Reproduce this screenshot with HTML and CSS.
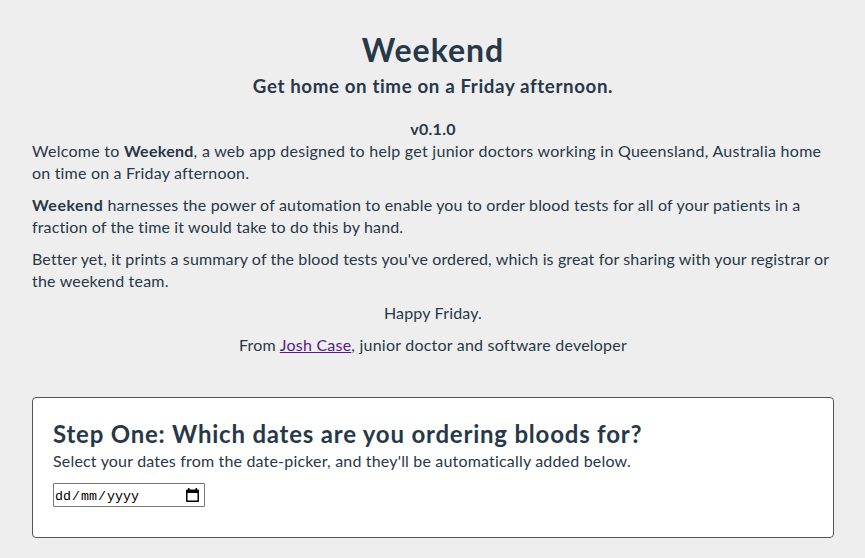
FILE: index.html
```html
<!DOCTYPE html>
<html lang="en">
<head>
  <meta charset="UTF-8" />
  <meta name="viewport" content="width=device-width, initial-scale=1.0"/>
  <title>Weekend</title>
  <link rel="stylesheet" href="styles.css">
</head>
<body>
  <div class="intro">
    <h1>Weekend</h1>
    <h3>Get home on time on a Friday afternoon.</h3>
    <h4>v0.1.0</h4>
    <p class="welcome">Welcome to <strong>Weekend</strong>, a web app designed to help get junior doctors working in Queensland, Australia home<br/>
      <span class="ending">on time on a Friday afternoon.</span></p>
    <p class="power"><strong>Weekend</strong> harnesses the power of automation to enable you to order blood tests for all of your patients in a<br/>
      <span class="ending">fraction of the time it would take to do this by hand.</span></p>
    <p class="summary">Better yet, it prints a summary of the blood tests you've ordered, which is great for sharing with your registrar or<br/>
      <span class="ending">the weekend team.</span></p>
    <p class="center">Happy Friday.</p>
    <p class="center author">From <a href="#">Josh Case</a>, junior doctor and software developer</p>
  </div>

  <div class="step">
    <h2>Step One: Which dates are you ordering bloods for?</h2>
    <p>Select your dates from the date-picker, and they'll be automatically added below.</p>
    <div class="date-input" tabindex="0">
      <span class="date-text"><span>dd</span><span>/</span><span>mm</span><span>/</span><span>yyyy</span></span>
      <svg class="calendar" width="14" height="15" viewBox="0 0 14 15">
        <path d="M2 0h1.5v1.5h6V0H11v1.5h1a1 1 0 0 1 1 1V13a1 1 0 0 1-1 1H1a1 1 0 0 1-1-1V2.500a1 1 0 0 1 1-1h1zM1.500 5v7.500h10V5z" fill="#000" fill-rule="evenodd"/>
      </svg>
    </div>
  </div>
</body>
</html>
```
FILE: styles.css
```css
* {
  box-sizing: border-box;
}
body {
  margin: 0;
  padding: 31px 31px 20px 32px;
  background: #eee;
  color: #273849;
  font-family: Lato, 'Liberation Sans', sans-serif;
  font-size: 16px;
  line-height: 22px;
}
h1, h2, h3, h4, p {
  margin: 0;
}
h1 {
  font-size: 32px;
  line-height: 38px;
  letter-spacing: 1px;
  text-align: center;
}
h3 {
  margin-top: 4px;
  font-size: 18.72px;
  line-height: 26px;
  letter-spacing: 0.62px;
  text-align: center;
}
h4 {
  margin-top: 19px;
  letter-spacing: 0.3px;
  text-align: center;
}
p {
  margin-bottom: 10px;
  letter-spacing: 0.18px;
  white-space: nowrap;
}
.welcome {
  letter-spacing: 0.27px;
}
.power strong {
  letter-spacing: 0.5px;
}
.summary {
  letter-spacing: 0.14px;
}
.ending {
  letter-spacing: 0.19px;
}
.power .ending {
  letter-spacing: 0.14px;
}
.center {
  text-align: center;
}
.author {
  letter-spacing: 0.22px;
}
a {
  color: #551a8b;
}
.step {
  height: 141px;
  margin-top: 41px;
  padding: 19px 20px;
  background: #fff;
  border: 1px solid #555;
  border-radius: 4px;
}
h2 {
  font-size: 24px;
  line-height: 33px;
  letter-spacing: 0.79px;
}
.date-input {
  display: flex;
  align-items: center;
  justify-content: space-between;
  width: 152px;
  height: 24px;
  margin-top: 11px;
  padding: 0 4px 0 1px;
  border: 1px solid #767676;
  border-radius: 1px;
  color: #000;
  font-family: 'Liberation Mono', monospace;
  font-size: 13.33px;
}
.date-text {
  display: flex;
  gap: 1px;
  padding-top: 3px;
}
```
